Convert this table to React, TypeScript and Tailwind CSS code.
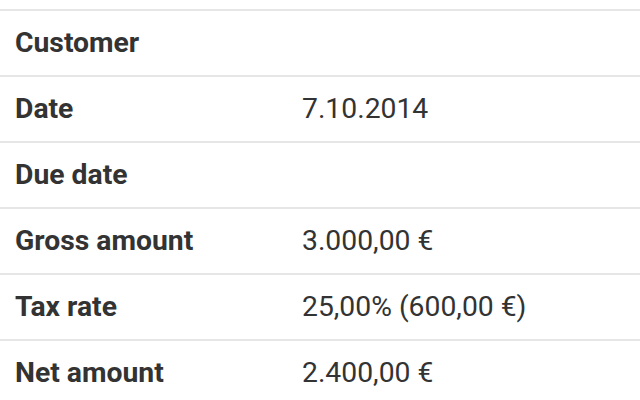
const rows: [string, string][] = [
  ["Customer", ""],
  ["Date", "7.10.2014"],
  ["Due date", ""],
  ["Gross amount", "3.000,00 €"],
  ["Tax rate", "25,00% (600,00 €)"],
  ["Net amount", "2.400,00 €"],
];

export default function App() {
  return (
    <div className="h-[400px] w-[640px] overflow-hidden bg-white pt-[9px] font-['Roboto',sans-serif] text-[28.3px] text-[#333]">
      {rows.map(([label, value]) => (
        <div key={label} className="flex h-[66px] items-center border-t-2 border-[#e6e6e6]">
          <div className="w-[302px] pl-[15px] font-bold">{label}</div>
          <div>{value}</div>
        </div>
      ))}
    </div>
  );
}
